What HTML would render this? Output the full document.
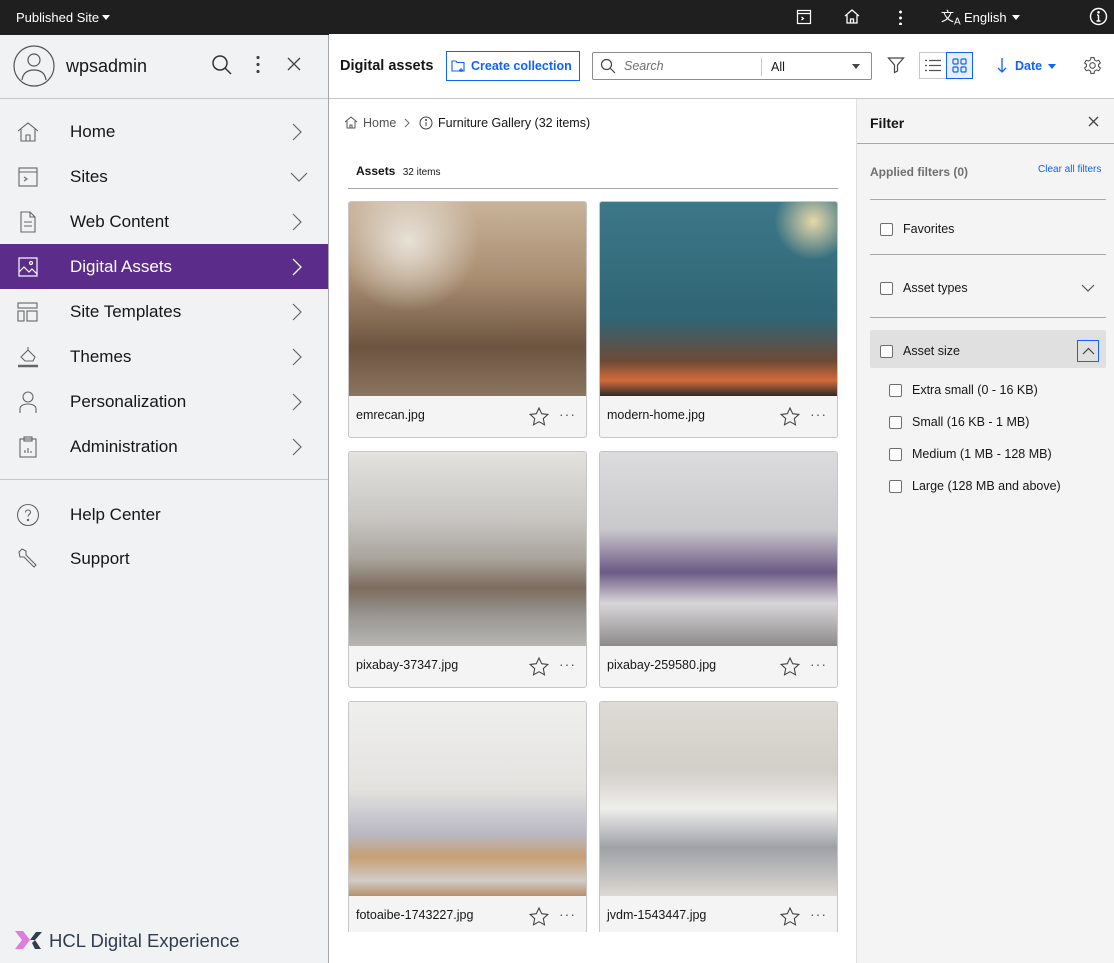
<!DOCTYPE html>
<html><head><meta charset="utf-8"><style>
*{box-sizing:border-box;margin:0;padding:0}
body{width:1114px;height:963px;overflow:hidden;font-family:"Liberation Sans",Arial,sans-serif;background:#fff;position:relative;color:#161616}
.abs{position:absolute}
.top{left:0;top:0;width:1114px;height:34px;background:#1f1f1f;color:#fff;font-size:13px}
.side{left:0;top:34px;width:329px;height:929px;background:#f1f2f4;border-right:1px solid #a8a8a8}
.nav{position:absolute;left:0;width:328px;height:45px;font-size:17px;display:flex;align-items:center}
.nav span{position:absolute;left:70px}
.nav svg.ic{position:absolute;left:16px}
.nav svg.ch{position:absolute;left:292px}
.card{position:absolute;width:239px;height:237px;border:1px solid #c6c6c6;border-radius:3px;background:#f4f4f4;overflow:hidden}
.card .img{height:194px}
.card .nm{position:absolute;left:7px;top:206px;font-size:12.5px;color:#161616}
.card .st{position:absolute;left:180px;top:205px}
.card .dt{position:absolute;left:210px;top:204px;font-size:14px;letter-spacing:1px;color:#555}
.fi{position:absolute;font-size:12.5px;color:#161616;display:flex;align-items:center}
.cb{width:13px;height:13px;border:1px solid #6f6f6f;border-radius:2px;background:#fff;margin-right:10px;display:inline-block}
</style></head><body>
<div class="abs top">
 <div class="abs" style="left:16px;top:10px">Published Site</div>
 <div class="abs" style="left:102px;top:15px;border:4px solid transparent;border-top:5px solid #fff"></div>
 <svg class="abs" style="left:796px;top:9px" width="16" height="16" viewBox="0 0 16 16" fill="none" stroke="#fff" stroke-width="1.2"><rect x="1.5" y="1.5" width="13" height="13"/><path d="M1.5 4.5h13M5.5 8l2 1.5-2 1.5"/></svg>
 <svg class="abs" style="left:843px;top:8px" width="18" height="17" viewBox="0 0 18 17" fill="none" stroke="#fff" stroke-width="1.3"><path d="M2 8L9 2l7 6M4 7v8h10V7M7.5 15v-4h3v4"/></svg>
 <div class="abs" style="left:899px;top:9px;width:3px;height:16px;background:radial-gradient(circle,#fff 1.3px,transparent 1.6px) 0 0/3px 6px repeat-y"></div>
 <div class="abs" style="left:941px;top:6px;font-size:13px">文<sub style="font-size:10px">A</sub></div>
 <div class="abs" style="left:964px;top:10px">English</div>
 <div class="abs" style="left:1012px;top:15px;border:4px solid transparent;border-top:5px solid #fff"></div>
 <svg class="abs" style="left:1089px;top:7px" width="19" height="19" viewBox="0 0 19 19" fill="none" stroke="#fff" stroke-width="1.4"><circle cx="9.5" cy="9.5" r="8"/><path d="M9.5 8v6M7.5 14h4M8 8h1.5"/><circle cx="9.5" cy="5.3" r=".6" fill="#fff"/></svg>
</div>
<div class="abs side">
 <svg class="abs" style="left:13px;top:11px" width="42" height="42" viewBox="0 0 42 42" fill="none" stroke="#555" stroke-width="1.2"><circle cx="21" cy="21" r="20"/><circle cx="21" cy="15" r="6"/><path d="M9 35c1-7 5-10 12-10s11 3 12 10"/></svg>
 <div class="abs" style="left:66px;top:22px;font-size:18px">wpsadmin</div>
 <svg class="abs" style="left:211px;top:20px" width="22" height="22" viewBox="0 0 22 22" fill="none" stroke="#333" stroke-width="1.5"><circle cx="9" cy="9" r="7"/><path d="M14 14l6 6"/></svg>
 <div class="abs" style="left:256px;top:20px;width:4px;height:20px;background:radial-gradient(circle,#444 1.5px,transparent 1.8px) 0 0/4px 7px repeat-y"></div>
 <svg class="abs" style="left:287px;top:23px" width="14" height="14" viewBox="0 0 14 14" stroke="#444" stroke-width="1.3"><path d="M1 1l12 12M13 1L1 13"/></svg>
 <div class="abs" style="left:0;top:64px;width:328px;height:1px;background:#c6c6c6"></div>
 <div class="nav" style="top:75px"><svg class="ic" width="24" height="24" viewBox="0 0 24 24" fill="none" stroke="#666" stroke-width="1.1"><path d="M2 11L12 3l10 8M5 9v12h14V9M10 21v-6h4v6"/></svg><span>Home</span><svg class="ch" width="10" height="18" viewBox="0 0 10 18" fill="none" stroke="#666" stroke-width="1.2"><path d="M1 1l8 8-8 8"/></svg></div>
 <div class="nav" style="top:120px"><svg class="ic" width="24" height="24" viewBox="0 0 24 24" fill="none" stroke="#666" stroke-width="1.1"><rect x="3" y="3" width="18" height="18"/><path d="M3 7h18M8 12l3 2-3 2"/></svg><span>Sites</span><svg class="abs" style="left:290px" width="18" height="10" viewBox="0 0 18 10" fill="none" stroke="#666" stroke-width="1.2"><path d="M1 1l8 8 8-8"/></svg></div>
 <div class="nav" style="top:165px"><svg class="ic" width="24" height="24" viewBox="0 0 24 24" fill="none" stroke="#666" stroke-width="1.1"><path d="M5 2h9l5 5v15H5zM14 2v5h5M8 12h8M8 16h8"/></svg><span>Web Content</span><svg class="ch" width="10" height="18" viewBox="0 0 10 18" fill="none" stroke="#666" stroke-width="1.2"><path d="M1 1l8 8-8 8"/></svg></div>
 <div class="nav" style="top:210px;background:#5b2c89;color:#fff"><svg class="ic" width="24" height="24" viewBox="0 0 24 24" fill="none" stroke="#fff" stroke-width="1.2"><rect x="3" y="3" width="18" height="18"/><path d="M3 17l5-5 5 5 3-3 5 5"/><circle cx="15" cy="8" r="1.5"/></svg><span>Digital Assets</span><svg class="ch" width="10" height="18" viewBox="0 0 10 18" fill="none" stroke="#fff" stroke-width="1.3"><path d="M1 1l8 8-8 8"/></svg></div>
 <div class="nav" style="top:255px"><svg class="ic" width="24" height="24" viewBox="0 0 24 24" fill="none" stroke="#666" stroke-width="1.1"><rect x="2" y="3" width="19" height="5"/><rect x="2" y="11" width="6" height="10"/><rect x="11" y="11" width="10" height="10"/></svg><span>Site Templates</span><svg class="ch" width="10" height="18" viewBox="0 0 10 18" fill="none" stroke="#666" stroke-width="1.2"><path d="M1 1l8 8-8 8"/></svg></div>
 <div class="nav" style="top:300px"><svg class="ic" width="24" height="24" viewBox="0 0 24 24" fill="none" stroke="#666" stroke-width="1.1"><path d="M12 2v3M12 5l-7 7 4 4h8l2-4z"/><path d="M2 21h20" stroke-width="2.5"/></svg><span>Themes</span><svg class="ch" width="10" height="18" viewBox="0 0 10 18" fill="none" stroke="#666" stroke-width="1.2"><path d="M1 1l8 8-8 8"/></svg></div>
 <div class="nav" style="top:345px"><svg class="ic" width="24" height="24" viewBox="0 0 24 24" fill="none" stroke="#666" stroke-width="1.1"><circle cx="12" cy="7" r="5"/><path d="M4 23v-4c0-3 3-5 8-5s8 2 8 5v4"/></svg><span>Personalization</span><svg class="ch" width="10" height="18" viewBox="0 0 10 18" fill="none" stroke="#666" stroke-width="1.2"><path d="M1 1l8 8-8 8"/></svg></div>
 <div class="nav" style="top:390px"><svg class="ic" width="24" height="24" viewBox="0 0 24 24" fill="none" stroke="#666" stroke-width="1.1"><rect x="4" y="4" width="16" height="18"/><rect x="8" y="2" width="8" height="4"/><path d="M9 18v-3M12 18v-5M15 18v-2"/></svg><span>Administration</span><svg class="ch" width="10" height="18" viewBox="0 0 10 18" fill="none" stroke="#666" stroke-width="1.2"><path d="M1 1l8 8-8 8"/></svg></div>
 <div class="abs" style="left:0;top:445px;width:328px;height:1px;background:#c6c6c6"></div>
 <div class="nav" style="top:458px"><svg class="ic" width="24" height="24" viewBox="0 0 24 24" fill="none" stroke="#666" stroke-width="1.1"><circle cx="12" cy="12" r="10.5"/><path d="M9.5 9.5c0-1.5 1-2.5 2.5-2.5s2.5 1 2.5 2.5-2.5 2-2.5 4"/><circle cx="12" cy="17" r=".7" fill="#666"/></svg><span>Help Center</span></div>
 <div class="nav" style="top:502px"><svg class="ic" width="24" height="24" viewBox="0 0 24 24" fill="none" stroke="#666" stroke-width="1.1"><path d="M3 5l3-3 4 2v4l10 10-2 2-10-10H4z"/></svg><span>Support</span></div>
 <svg class="abs" style="left:13px;top:896px" width="30" height="20" viewBox="0 0 30 20"><path d="M2 1h8l7 9-7 9H2l7-9z" fill="#e07be0"/><path d="M17 10l6-8h6l-7 8zM19 13l3-3 6 9h-6z" fill="#2f3e4e"/></svg>
 <div class="abs" style="left:49px;top:896px;font-size:18.5px;color:#2f3e4e">HCL Digital Experience</div>
</div>
<div class="abs" style="left:0;top:33px;width:372px;height:2px;background:#1f1f1f"></div>
<!-- toolbar -->
<div class="abs" style="left:329px;top:34px;width:785px;height:65px;border-bottom:1px solid #c6c6c6;background:#fff">
 <div class="abs" style="left:11px;top:24px;font-size:14.5px;font-weight:bold">Digital assets</div>
 <div class="abs" style="left:117px;top:17px;width:134px;height:30px;border:1px solid #0f62fe;color:#0f62fe;font-size:12.5px;font-weight:bold;padding:7px 0 0 24px">Create collection</div>
 <svg class="abs" style="left:122px;top:25px" width="15" height="14" viewBox="0 0 15 14" fill="none" stroke="#0f62fe" stroke-width="1.1"><path d="M1 2h4l1 1.5h7V12H1zM10 9v4M8 11h4"/></svg>
 <div class="abs" style="left:263px;top:18px;width:280px;height:28px;border:1px solid #8d8d8d;border-radius:2px"></div>
 <svg class="abs" style="left:271px;top:24px" width="16" height="16" viewBox="0 0 16 16" fill="none" stroke="#444" stroke-width="1.2"><circle cx="6.5" cy="6.5" r="5"/><path d="M10 10l5 5"/></svg>
 <div class="abs" style="left:295px;top:25px;font-size:12.5px;font-style:italic;color:#6f6f6f">Search</div>
 <div class="abs" style="left:432px;top:24px;width:1px;height:18px;background:#c6c6c6"></div>
 <div class="abs" style="left:442px;top:26px;font-size:12.5px">All</div>
 <div class="abs" style="left:523px;top:30px;border:4px solid transparent;border-top:5px solid #444"></div>
 <svg class="abs" style="left:558px;top:22px" width="18" height="18" viewBox="0 0 18 18" fill="none" stroke="#444" stroke-width="1.2"><path d="M1.5 2h15l-6 7v6l-3 1.5V9z"/></svg>
 <div class="abs" style="left:590px;top:18px;width:27px;height:27px;border:1px solid #c6c6c6;border-right:none"></div>
 <svg class="abs" style="left:596px;top:25px" width="16" height="13" viewBox="0 0 16 13" stroke="#555" stroke-width="1.2"><path d="M4 1.5h12M4 6.5h12M4 11.5h12M0 1.5h2M0 6.5h2M0 11.5h2"/></svg>
 <div class="abs" style="left:617px;top:18px;width:27px;height:27px;border:1px solid #0f62fe;background:#e5effe"></div>
 <svg class="abs" style="left:623px;top:24px" width="15" height="15" viewBox="0 0 15 15" fill="none" stroke="#0f62fe" stroke-width="1.2"><rect x="1" y="1" width="5" height="5" rx="1"/><rect x="9" y="1" width="5" height="5" rx="1"/><rect x="1" y="9" width="5" height="5" rx="1"/><rect x="9" y="9" width="5" height="5" rx="1"/></svg>
 <svg class="abs" style="left:668px;top:23px" width="10" height="16" viewBox="0 0 10 16" fill="none" stroke="#0f62fe" stroke-width="1.3"><path d="M5 1v14M1 11l4 4 4-4"/></svg>
 <div class="abs" style="left:686px;top:25px;font-size:12.5px;font-weight:bold;color:#0f62fe">Date</div>
 <div class="abs" style="left:719px;top:30px;border:4px solid transparent;border-top:5px solid #0f62fe"></div>
 <svg class="abs" style="left:754px;top:22px" width="19" height="19" viewBox="0 0 24 24" fill="none" stroke="#555" stroke-width="1.4"><circle cx="12" cy="12" r="3.5"/><path d="M10 2h4l.6 3 2.4 1.4 2.9-1 2 3.4-2.3 2v2.4l2.3 2-2 3.4-2.9-1L14.6 19l-.6 3h-4l-.6-3L7 17.6l-2.9 1-2-3.4 2.3-2v-2.4l-2.3-2 2-3.4 2.9 1L9.4 5z"/></svg>
</div>
<!-- breadcrumb -->
<svg class="abs" style="left:344px;top:116px" width="14" height="13" viewBox="0 0 14 13" fill="none" stroke="#555" stroke-width="1"><path d="M1 6l6-5 6 5M3 5v7h8V5M6 12V9h2v3"/></svg>
<div class="abs" style="left:363px;top:116px;font-size:12.5px;color:#525252">Home</div>
<svg class="abs" style="left:404px;top:118px" width="6" height="10" viewBox="0 0 6 10" fill="none" stroke="#666"><path d="M1 1l4 4-4 4"/></svg>
<svg class="abs" style="left:419px;top:116px" width="14" height="14" viewBox="0 0 14 14" fill="none" stroke="#444"><circle cx="7" cy="7" r="6"/><path d="M7 6v4"/><circle cx="7" cy="4" r=".5" fill="#444"/></svg>
<div class="abs" style="left:438px;top:116px;font-size:12.5px">Furniture Gallery (32 items)</div>
<div class="abs" style="left:356px;top:164px;font-size:12px;font-weight:bold">Assets <span style="font-weight:normal;font-size:10px;margin-left:4px">32 items</span></div>
<div class="abs" style="left:348px;top:188px;width:490px;height:1px;background:#a8a8a8"></div>
<!-- cards -->
<div class="card" style="left:348px;top:201px"><div class="img" style="background:radial-gradient(circle at 25% 20%,#e8e2d8 0,transparent 30%),linear-gradient(180deg,#c9b39a 0%,#a88d70 40%,#6d5440 75%,#8a7561 100%)"></div><div class="nm">emrecan.jpg</div><svg class="st" width="20" height="19" viewBox="0 0 20 19" fill="none" stroke="#444" stroke-width="1.1"><path d="M10 1l2.7 5.7 6.2.7-4.6 4.2 1.2 6.2L10 14.7l-5.5 3.1 1.2-6.2L1.1 7.4l6.2-.7z"/></svg><div class="dt">···</div></div>
<div class="card" style="left:599px;top:201px"><div class="img" style="background:radial-gradient(circle at 90% 10%,#e6d7a8 0,transparent 14%),linear-gradient(180deg,#3d7888 0%,#2f6575 60%,#6d4a36 82%,#d46a3a 92%,#2d2a28 100%)"></div><div class="nm">modern-home.jpg</div><svg class="st" width="20" height="19" viewBox="0 0 20 19" fill="none" stroke="#444" stroke-width="1.1"><path d="M10 1l2.7 5.7 6.2.7-4.6 4.2 1.2 6.2L10 14.7l-5.5 3.1 1.2-6.2L1.1 7.4l6.2-.7z"/></svg><div class="dt">···</div></div>
<div class="card" style="left:348px;top:451px"><div class="img" style="background:linear-gradient(180deg,#e4e2de 0%,#c7c5c1 35%,#a9a49c 55%,#7c6c5e 70%,#9a9894 85%,#b7b5b2 100%)"></div><div class="nm">pixabay-37347.jpg</div><svg class="st" width="20" height="19" viewBox="0 0 20 19" fill="none" stroke="#444" stroke-width="1.1"><path d="M10 1l2.7 5.7 6.2.7-4.6 4.2 1.2 6.2L10 14.7l-5.5 3.1 1.2-6.2L1.1 7.4l6.2-.7z"/></svg><div class="dt">···</div></div>
<div class="card" style="left:599px;top:451px"><div class="img" style="background:linear-gradient(180deg,#dcdcde 0%,#c9c8ca 40%,#6b5a86 62%,#d8d6d8 78%,#8d8a8c 100%)"></div><div class="nm">pixabay-259580.jpg</div><svg class="st" width="20" height="19" viewBox="0 0 20 19" fill="none" stroke="#444" stroke-width="1.1"><path d="M10 1l2.7 5.7 6.2.7-4.6 4.2 1.2 6.2L10 14.7l-5.5 3.1 1.2-6.2L1.1 7.4l6.2-.7z"/></svg><div class="dt">···</div></div>
<div class="card" style="left:348px;top:701px"><div class="img" style="background:linear-gradient(180deg,#efefed 0%,#e3e2df 45%,#b9b8c4 68%,#c79f73 80%,#d0cdc9 92%,#b8906a 100%)"></div><div class="nm">fotoaibe-1743227.jpg</div><svg class="st" width="20" height="19" viewBox="0 0 20 19" fill="none" stroke="#444" stroke-width="1.1"><path d="M10 1l2.7 5.7 6.2.7-4.6 4.2 1.2 6.2L10 14.7l-5.5 3.1 1.2-6.2L1.1 7.4l6.2-.7z"/></svg><div class="dt">···</div></div>
<div class="card" style="left:599px;top:701px"><div class="img" style="background:linear-gradient(180deg,#dedbd6 0%,#d2cec8 35%,#eeeeec 55%,#9fa1a6 75%,#dcd9d4 100%)"></div><div class="nm">jvdm-1543447.jpg</div><svg class="st" width="20" height="19" viewBox="0 0 20 19" fill="none" stroke="#444" stroke-width="1.1"><path d="M10 1l2.7 5.7 6.2.7-4.6 4.2 1.2 6.2L10 14.7l-5.5 3.1 1.2-6.2L1.1 7.4l6.2-.7z"/></svg><div class="dt">···</div></div>
<div class="abs" style="left:330px;top:932px;width:526px;height:31px;background:#fff"></div>
<!-- filter panel -->
<div class="abs" style="left:856px;top:99px;width:258px;height:864px;background:#f4f4f4;border-left:1px solid #e0e0e0">
 <div class="abs" style="left:13px;top:16px;font-size:14px;font-weight:bold">Filter</div>
 <svg class="abs" style="left:231px;top:17px" width="11" height="11" viewBox="0 0 11 11" stroke="#444" stroke-width="1.3"><path d="M1 1l9 9M10 1l-9 9"/></svg>
 <div class="abs" style="left:0;top:44px;width:258px;height:1px;background:#a8a8a8"></div>
 <div class="abs" style="left:13px;top:66px;font-size:12px;font-weight:bold;color:#6f6f6f">Applied filters (0)</div>
 <div class="abs" style="left:181px;top:65px;font-size:10px;color:#0f62fe">Clear all filters</div>
 <div class="abs" style="left:13px;top:100px;width:236px;height:1px;background:#a8a8a8"></div>
 <div class="fi" style="left:23px;top:123px"><span class="cb"></span>Favorites</div>
 <div class="abs" style="left:13px;top:155px;width:236px;height:1px;background:#a8a8a8"></div>
 <div class="fi" style="left:23px;top:182px"><span class="cb"></span>Asset types</div>
 <svg class="abs" style="left:224px;top:185px" width="14" height="8" viewBox="0 0 14 8" fill="none" stroke="#555" stroke-width="1.2"><path d="M1 1l6 6 6-6"/></svg>
 <div class="abs" style="left:13px;top:218px;width:236px;height:1px;background:#a8a8a8"></div>
 <div class="abs" style="left:13px;top:231px;width:236px;height:38px;background:#e0e0e0;border-radius:2px"></div>
 <div class="fi" style="left:23px;top:245px"><span class="cb"></span>Asset size</div>
 <div class="abs" style="left:220px;top:241px;width:22px;height:22px;border:1px solid #0f62fe"></div>
 <svg class="abs" style="left:225px;top:248px" width="13" height="8" viewBox="0 0 13 8" fill="none" stroke="#444" stroke-width="1.2"><path d="M1 7l5.5-5.5L12 7"/></svg>
 <div class="fi" style="left:32px;top:284px"><span class="cb"></span>Extra small (0 - 16 KB)</div>
 <div class="fi" style="left:32px;top:316px"><span class="cb"></span>Small (16 KB - 1 MB)</div>
 <div class="fi" style="left:32px;top:348px"><span class="cb"></span>Medium (1 MB - 128 MB)</div>
 <div class="fi" style="left:32px;top:380px"><span class="cb"></span>Large (128 MB and above)</div>
</div>
</body></html>
